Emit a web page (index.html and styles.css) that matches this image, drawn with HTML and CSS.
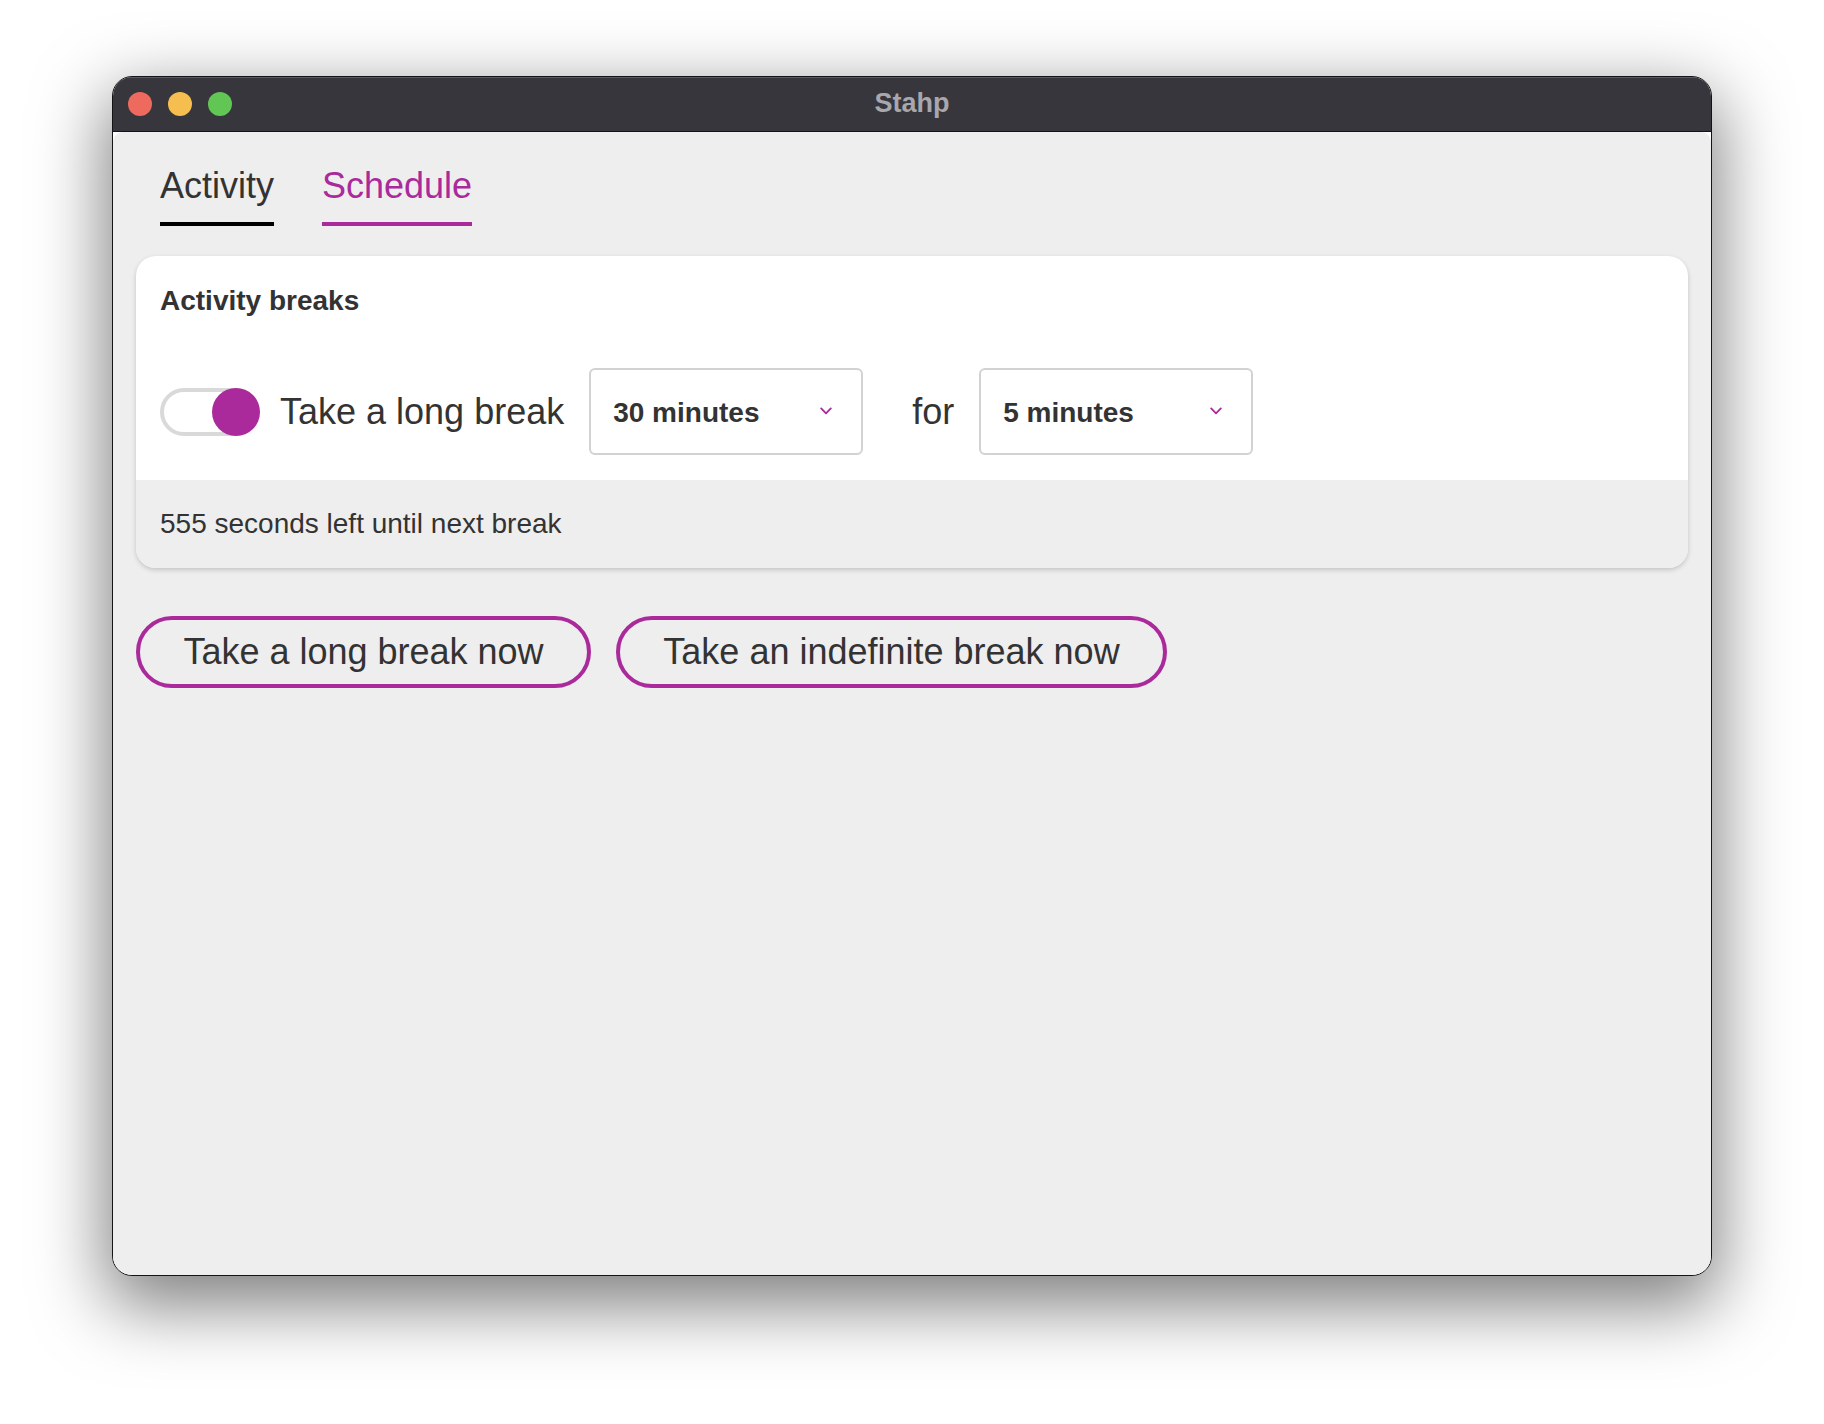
FILE: index.html
```html
<!DOCTYPE html>
<html lang="en">
<head>
<meta charset="utf-8">
<title>Stahp</title>
<link rel="stylesheet" href="styles.css">
</head>
<body>
<div class="desktop">
  <div class="window">
    <div class="titlebar">
      <div class="lights">
        <span class="light red"></span>
        <span class="light yellow"></span>
        <span class="light green"></span>
      </div>
      <div class="title">Stahp</div>
      <div class="spacer"></div>
    </div>
    <div class="content">
      <nav class="tabs">
        <div class="tab">Activity</div>
        <div class="tab active">Schedule</div>
      </nav>
      <section class="card">
        <div class="card-body">
          <h2 class="card-title">Activity breaks</h2>
          <div class="row">
            <div class="toggle"><span class="knob"></span></div>
            <span class="label">Take a long break</span>
            <div class="select first">
              <span class="select-text">30 minutes</span>
              <svg class="chev" width="12" height="8" viewBox="0 0 12 8"><path d="M1.2 1.4 L6 6.4 L10.8 1.4" fill="none" stroke="#aa2a9c" stroke-width="1.8" stroke-linecap="round" stroke-linejoin="round"/></svg>
            </div>
            <span class="label for">for</span>
            <div class="select">
              <span class="select-text">5 minutes</span>
              <svg class="chev" width="12" height="8" viewBox="0 0 12 8"><path d="M1.2 1.4 L6 6.4 L10.8 1.4" fill="none" stroke="#aa2a9c" stroke-width="1.8" stroke-linecap="round" stroke-linejoin="round"/></svg>
            </div>
          </div>
        </div>
        <div class="card-footer">555 seconds left until next break</div>
      </section>
      <div class="actions">
        <button class="pill one">Take a long break now</button>
        <button class="pill two">Take an indefinite break now</button>
      </div>
    </div>
  </div>
</div>
</body>
</html>
```
FILE: styles.css
```css
html, body {
  margin: 0;
  padding: 0;
}
body {
  width: 1824px;
  height: 1424px;
  background: #ffffff;
  overflow: hidden;
  font-family: "Liberation Sans", Arial, Helvetica, sans-serif;
  color: #333333;
}
.desktop {
  padding: 76px 0 0 112px;
}
.window {
  box-sizing: border-box;
  width: 1600px;
  height: 1200px;
  border: 1px solid #141414;
  border-radius: 20px;
  overflow: hidden;
  background: #ffffff;
  display: flex;
  flex-direction: column;
  box-shadow: 0 24px 70px 6px rgba(0, 0, 0, 0.5);
}
.titlebar {
  height: 54px;
  background: #37363c;
  border-bottom: 1px solid #141414;
  box-shadow: inset 0 1px 0 #5b5a60;
  display: grid;
  grid-template-columns: 1fr auto 1fr;
  align-items: center;
  flex: none;
}
.lights {
  display: flex;
  gap: 16px;
  padding-left: 15px;
}
.light {
  width: 24px;
  height: 24px;
  border-radius: 50%;
  display: block;
}
.red { background: #ee6a5f; }
.yellow { background: #f5be4f; }
.green { background: #62c655; }
.title {
  font-weight: bold;
  font-size: 27px;
  color: #a8a7ad;
  line-height: 30px;
  padding-bottom: 2px;
}
.content {
  flex: 1;
  background: #eeeeee;
  border-radius: 10px 10px 0 0;
  padding: 0 23px;
}
.tabs {
  display: flex;
  gap: 48px;
  padding-left: 24px;
  margin-top: 34px;
}
.tab {
  font-size: 36px;
  line-height: 40px;
  padding-bottom: 16px;
  border-bottom: 4px solid #000000;
  color: #333333;
}
.tab.active {
  color: #aa2a9c;
  border-bottom-color: #aa2a9c;
}
.card {
  margin-top: 30px;
  background: #ffffff;
  border-radius: 20px;
  overflow: hidden;
  box-shadow: 0 2px 5px rgba(0, 0, 0, 0.18);
}
.card-body {
  padding: 29px 24px 25px;
}
.card-title {
  margin: 0;
  font-size: 28px;
  line-height: 32px;
  font-weight: bold;
  color: #333333;
}
.row {
  display: flex;
  align-items: center;
  margin-top: 51px;
  height: 87px;
}
.toggle {
  position: relative;
  box-sizing: border-box;
  width: 98px;
  height: 48px;
  border: 4px solid #d9d9d9;
  border-radius: 24px;
  background: #ffffff;
  margin-right: 22px;
}
.knob {
  position: absolute;
  right: -6px;
  top: -4px;
  width: 48px;
  height: 48px;
  border-radius: 50%;
  background: #aa2a9c;
}
.label {
  font-size: 36px;
  line-height: 40px;
  color: #333333;
}
.label.for {
  margin: 0 25px 0 49px;
}
.select {
  box-sizing: border-box;
  width: 274px;
  height: 87px;
  border: 2px solid #d2d2d2;
  border-radius: 6px;
  display: flex;
  align-items: center;
  justify-content: space-between;
  padding: 2px 29px 0 22px;
  background: #ffffff;
}
.select.first {
  margin-left: 25px;
}
.select-text {
  font-size: 28px;
  font-weight: bold;
  line-height: 32px;
  color: #333333;
}
.chev {
  display: block;
  margin-top: -4px;
}
.card-footer {
  background: #eeeeee;
  font-size: 28px;
  line-height: 32px;
  padding: 28px 24px 28px;
  color: #333333;
}
.actions {
  display: flex;
  gap: 25px;
  margin-top: 48px;
}
.pill {
  box-sizing: border-box;
  height: 72px;
  border: 4px solid #aa2a9c;
  border-radius: 36px;
  background: transparent;
  font-family: "Liberation Sans", Arial, Helvetica, sans-serif;
  font-size: 36px;
  color: #333333;
  padding: 0 40px;
  line-height: 40px;
}
.pill.one { width: 455px; }
.pill.two { width: 551px; }
```
